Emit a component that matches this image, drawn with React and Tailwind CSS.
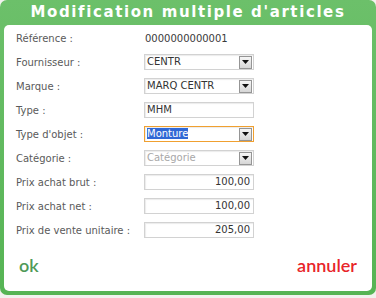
import React from 'react';

const font = { fontFamily: '"DejaVu Sans", Verdana, sans-serif' };

function Arrow() {
    return (
        <span className="flex h-[13px] w-[13px] items-center justify-center border border-[#959595] bg-gradient-to-b from-[#f6f6f6] to-[#d6d6d6]">
            <svg width="7" height="4" viewBox="0 0 7 4"><path d="M0 0h7L3.5 4z" fill="#111" /></svg>
        </span>
    );
}

function Field({ value, select, align = 'left', muted, focus }) {
    return (
        <div className={`flex h-[16px] w-[110px] items-center border ${focus ? 'border-[#f0a030]' : 'border-[#d2d2d2]'} bg-white pl-[2px] pr-[1px] shadow-[inset_1px_1px_1px_#ececec]`}>
            <span className={`flex-1 text-[10px] leading-none ${align === 'right' ? 'text-right pr-[2px]' : ''} ${muted ? 'text-[#a8a8a8]' : 'text-[#333]'}`}>
                {focus ? <span className="bg-[#3168d5] text-white">{value}</span> : value}
            </span>
            {select && <Arrow />}
        </div>
    );
}

const rows = [
    { label: 'Fournisseur :', value: 'CENTR', select: true },
    { label: 'Marque :', value: 'MARQ CENTR', select: true },
    { label: 'Type :', value: 'MHM' },
    { label: "Type d'objet :", value: 'Monture', select: true, focus: true },
    { label: 'Catégorie :', value: 'Catégorie', select: true, muted: true },
    { label: 'Prix achat brut :', value: '100,00', align: 'right' },
    { label: 'Prix achat net :', value: '100,00', align: 'right' },
    { label: 'Prix de vente unitaire :', value: '205,00', align: 'right' },
];

export default function App() {
    return (
        <div className="h-[298px] w-[376px] bg-[#f2f2ee]" style={font}>
            <div className="flex h-[295px] flex-col rounded-[7px] bg-gradient-to-b from-[#6cc06a] to-[#56b454] px-[4px] pb-[4px]">
                <div className="flex h-[25px] items-center justify-center text-[15px] font-bold tracking-[1.6px] text-white">
                    Modification multiple d'articles
                </div>
                <div className="flex flex-1 flex-col rounded-[5px] bg-white pl-[12px] pt-[1px]">
                    <div className="flex h-[24px] items-center text-[10px] text-[#5a5a5a]">
                        <span className="w-[129px]">Référence :</span>
                        <span className="text-[#3a3a3a]">0000000000001</span>
                    </div>
                    {rows.map((r) => (
                        <div key={r.label} className="flex h-[24px] items-center text-[10px] text-[#5a5a5a]">
                            <span className="w-[128px]">{r.label}</span>
                            <Field {...r} />
                        </div>
                    ))}
                    <div className="mt-[14px] flex items-center justify-between pl-[3px] pr-[15px] text-[18px] font-semibold leading-none" style={{ fontFamily: '"Lato", "DejaVu Sans", sans-serif' }}>
                        <span className="text-[#4f9a58]">ok</span>
                        <span className="text-[#e8242a]">annuler</span>
                    </div>
                </div>
            </div>
        </div>
    );
}
